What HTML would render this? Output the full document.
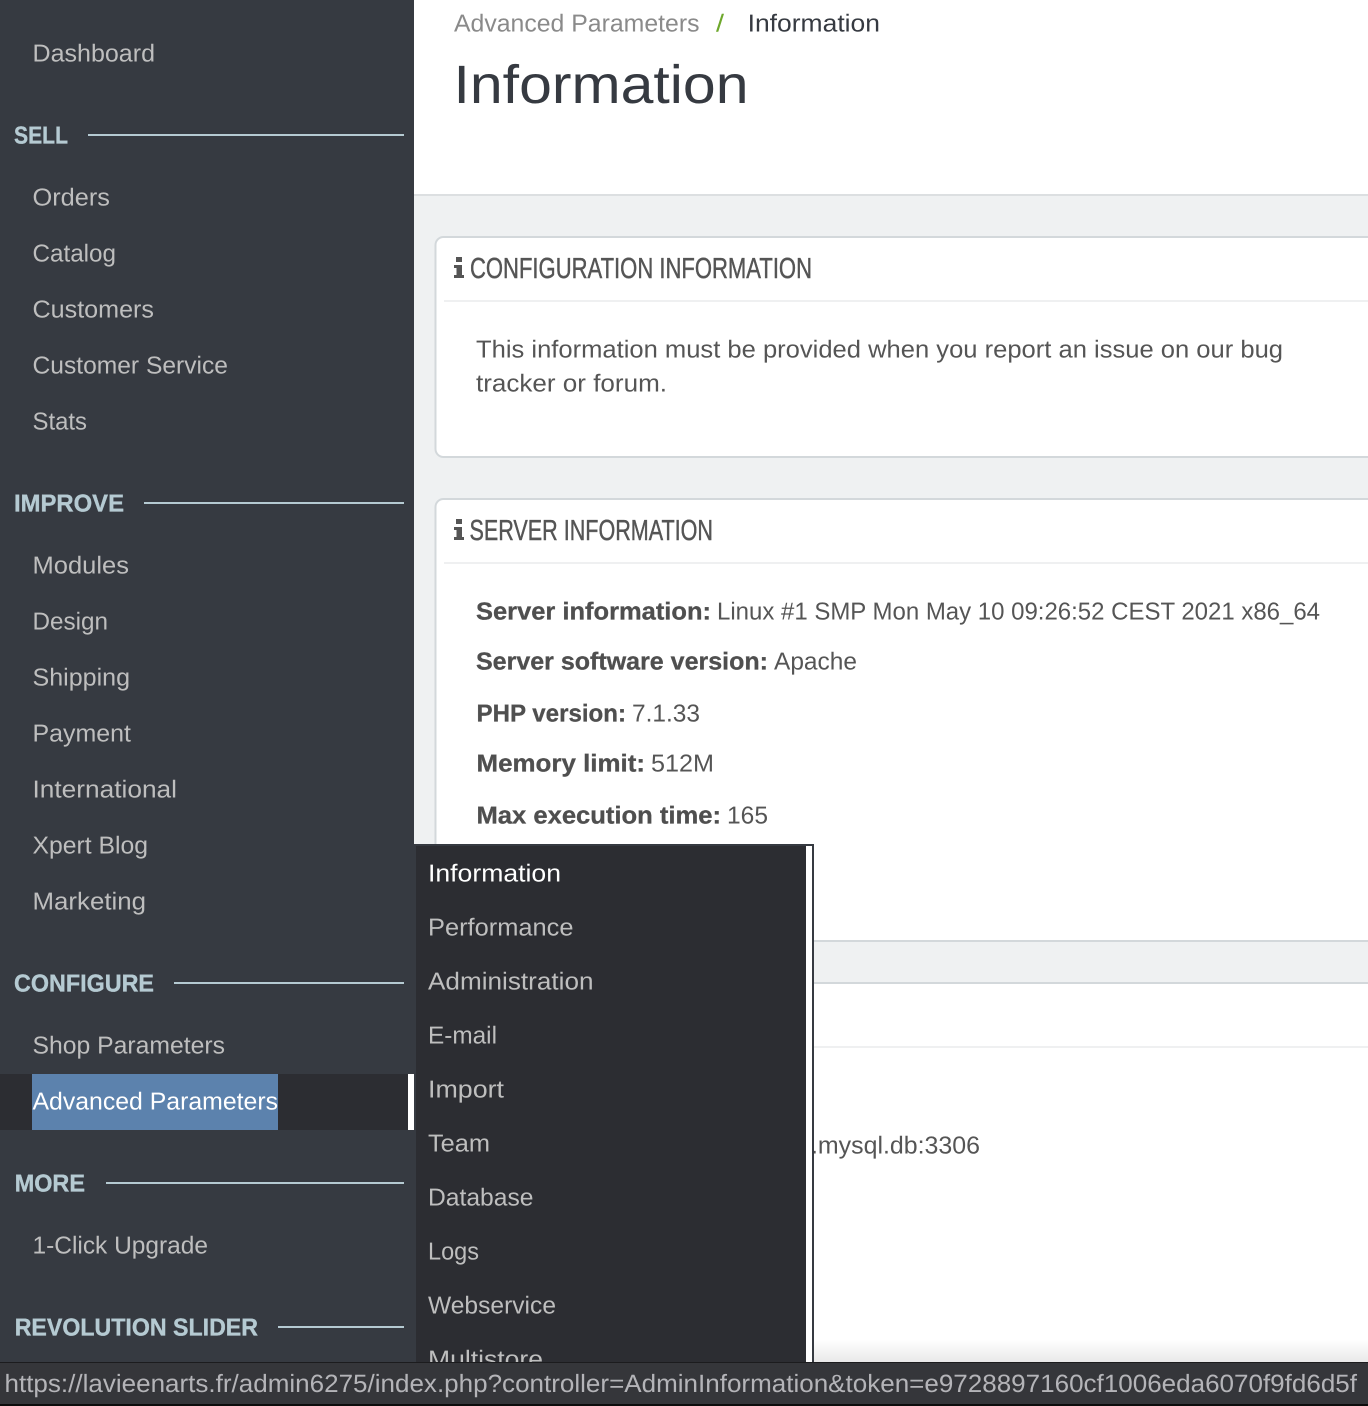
<!DOCTYPE html>
<html lang="en"><head><meta charset="utf-8"><title>Information</title>
<style>
html,body{margin:0;padding:0;background:#fff;width:1368px;height:1406px;overflow:hidden}
svg{display:block}
text{font-family:"Liberation Sans",sans-serif;text-rendering:geometricPrecision}
.s text{font-size:24.5px;fill:#bebebe}
.h text{font-size:24.5px;font-weight:700;fill:#b5cad2;stroke:#b5cad2;stroke-width:.35px}
.p text{font-size:24.5px;fill:#bebebe}
.m text{font-size:24.5px;fill:#555}
.m .b{font-weight:700;fill:#4f4f4f;stroke:#4f4f4f;stroke-width:.3px}
.t text{font-size:29px;fill:#555;stroke:#555;stroke-width:.45px}
</style></head><body>
<svg width="1368" height="1406" viewBox="0 0 1368 1406" xmlns="http://www.w3.org/2000/svg">
<defs><linearGradient id="f" x1="0" y1="0" x2="0" y2="1"><stop offset="0" stop-color="#fff"/><stop offset="1" stop-color="#e9e9e9"/></linearGradient></defs>
<rect width="1368" height="1406" fill="#fff"/>
<!-- main background -->
<rect x="414" y="196" width="954" height="1210" fill="#eff1f2"/>
<rect x="414" y="194" width="954" height="2" fill="#dcdfe1"/>
<!-- panels -->
<rect x="435.500" y="237" width="960" height="220" rx="8" fill="#fff" stroke="#d3d8db" stroke-width="2"/>
<rect x="444" y="300" width="924" height="2" fill="#eff0f1"/>
<rect x="435.500" y="499" width="960" height="442" rx="8" fill="#fff" stroke="#d3d8db" stroke-width="2"/>
<rect x="444" y="562" width="924" height="2" fill="#eff0f1"/>
<rect x="435.500" y="983" width="960" height="460" rx="8" fill="#fff" stroke="#d3d8db" stroke-width="2"/>
<rect x="444" y="1046" width="924" height="2" fill="#eff0f1"/>
<rect x="814" y="1340" width="554" height="22" fill="url(#f)"/>
<!-- header text -->
<text x="454" y="31.700" font-size="24.5" fill="#8a8a8a" textLength="245.500" lengthAdjust="spacingAndGlyphs">Advanced Parameters</text>
<text x="716" y="31.700" font-size="24.5" fill="#6ea82c" textLength="8" lengthAdjust="spacingAndGlyphs">/</text>
<text x="747.600" y="31.700" font-size="24.5" fill="#363a41" textLength="132.400" lengthAdjust="spacingAndGlyphs">Information</text>
<text x="453.500" y="103" font-size="54" fill="#363a41" textLength="295" lengthAdjust="spacingAndGlyphs">Information</text>
<!-- panel titles -->
<path fill="#555" d="M456 257h6v5h-6zM454 265h8v10h2v3h-10v-3h2.500v-7h-2.500z"/>
<path fill="#555" d="M456 519h6v5h-6zM454 527h8v10h2v3h-10v-3h2.500v-7h-2.500z"/>
<g class="t">
<text x="470" y="278" textLength="342" lengthAdjust="spacingAndGlyphs">CONFIGURATION INFORMATION</text>
<text x="469.500" y="540" textLength="243.500" lengthAdjust="spacingAndGlyphs">SERVER INFORMATION</text>
</g>
<g class="m" transform="translate(0,-0.4)">
<text x="476" y="358" textLength="807" lengthAdjust="spacingAndGlyphs">This information must be provided when you report an issue on our bug</text>
<text x="476" y="392" textLength="191" lengthAdjust="spacingAndGlyphs">tracker or forum.</text>
<text class="b" x="476" y="620" textLength="235" lengthAdjust="spacingAndGlyphs">Server information:</text>
<text x="717" y="620" textLength="603" lengthAdjust="spacingAndGlyphs">Linux #1 SMP Mon May 10 09:26:52 CEST 2021 x86_64</text>
<text class="b" x="476" y="670" textLength="292" lengthAdjust="spacingAndGlyphs">Server software version:</text>
<text x="774" y="670" textLength="83" lengthAdjust="spacingAndGlyphs">Apache</text>
<text class="b" x="476.500" y="722" textLength="149.500" lengthAdjust="spacingAndGlyphs">PHP version:</text>
<text x="632" y="722" textLength="68" lengthAdjust="spacingAndGlyphs">7.1.33</text>
<text class="b" x="476.500" y="772" textLength="168.500" lengthAdjust="spacingAndGlyphs">Memory limit:</text>
<text x="651" y="772" textLength="63" lengthAdjust="spacingAndGlyphs">512M</text>
<text class="b" x="476.500" y="824" textLength="244.500" lengthAdjust="spacingAndGlyphs">Max execution time:</text>
<text x="727" y="824" textLength="41" lengthAdjust="spacingAndGlyphs">165</text>
<text x="811" y="1154" textLength="169" lengthAdjust="spacingAndGlyphs">.mysql.db:3306</text>
</g>
<!-- sidebar -->
<rect width="414" height="1406" fill="#363a41"/>
<rect x="0" y="1074" width="408" height="56" fill="#2c2d32"/>
<rect x="408" y="1074" width="6" height="56" fill="#fff"/>
<rect x="32" y="1074" width="246" height="56" fill="#5c82ad"/>
<g class="s" transform="translate(-0.5,-0.4)">
<text x="33" y="62" textLength="122.500" lengthAdjust="spacingAndGlyphs">Dashboard</text>
<text x="33" y="206" textLength="77.500" lengthAdjust="spacingAndGlyphs">Orders</text>
<text x="33" y="262" textLength="83.500" lengthAdjust="spacingAndGlyphs">Catalog</text>
<text x="33" y="318" textLength="121.500" lengthAdjust="spacingAndGlyphs">Customers</text>
<text x="33" y="374" textLength="195.500" lengthAdjust="spacingAndGlyphs">Customer Service</text>
<text x="33" y="430" textLength="54.500" lengthAdjust="spacingAndGlyphs">Stats</text>
<text x="33" y="574" textLength="96.500" lengthAdjust="spacingAndGlyphs">Modules</text>
<text x="33" y="630" textLength="75.500" lengthAdjust="spacingAndGlyphs">Design</text>
<text x="33" y="686" textLength="97.500" lengthAdjust="spacingAndGlyphs">Shipping</text>
<text x="33" y="742" textLength="98.500" lengthAdjust="spacingAndGlyphs">Payment</text>
<text x="33" y="798" textLength="144.500" lengthAdjust="spacingAndGlyphs">International</text>
<text x="33" y="854" textLength="115.500" lengthAdjust="spacingAndGlyphs">Xpert Blog</text>
<text x="33" y="910" textLength="113.500" lengthAdjust="spacingAndGlyphs">Marketing</text>
<text x="33" y="1054" textLength="192.500" lengthAdjust="spacingAndGlyphs">Shop Parameters</text>
<text x="33" y="1110" textLength="245.500" lengthAdjust="spacingAndGlyphs" style="fill:#fff">Advanced Parameters</text>
<text x="33" y="1254" textLength="175.500" lengthAdjust="spacingAndGlyphs">1-Click Upgrade</text>
</g>
<g class="h" transform="translate(0,-0.4)">
<text x="14" y="144" textLength="54" lengthAdjust="spacingAndGlyphs">SELL</text>
<text x="14" y="512" textLength="110" lengthAdjust="spacingAndGlyphs">IMPROVE</text>
<text x="14" y="992" textLength="140" lengthAdjust="spacingAndGlyphs">CONFIGURE</text>
<text x="14.700" y="1192" textLength="70.300" lengthAdjust="spacingAndGlyphs">MORE</text>
<text x="14.700" y="1336" textLength="243.300" lengthAdjust="spacingAndGlyphs">REVOLUTION SLIDER</text>
</g>
<g fill="#b5cad2">
<rect x="88" y="134" width="316" height="2"/>
<rect x="144" y="502" width="260" height="2"/>
<rect x="174" y="982" width="230" height="2"/>
<rect x="106" y="1182" width="298" height="2"/>
<rect x="278" y="1326" width="126" height="2"/>
</g>
<!-- flyout -->
<rect x="414" y="844" width="400" height="520" fill="#363a41"/>
<rect x="416" y="846" width="390" height="518" fill="#2c2d32"/>
<rect x="806" y="846" width="6" height="518" fill="#fff"/>
<g class="p" transform="translate(0,-0.4)">
<text x="428" y="882" textLength="133" lengthAdjust="spacingAndGlyphs" style="fill:#fff">Information</text>
<text x="428" y="936" textLength="145.500" lengthAdjust="spacingAndGlyphs">Performance</text>
<text x="428" y="990" textLength="165.500" lengthAdjust="spacingAndGlyphs">Administration</text>
<text x="428" y="1044" textLength="69" lengthAdjust="spacingAndGlyphs">E-mail</text>
<text x="428" y="1098" textLength="76" lengthAdjust="spacingAndGlyphs">Import</text>
<text x="428" y="1152" textLength="62" lengthAdjust="spacingAndGlyphs">Team</text>
<text x="428" y="1206" textLength="105.500" lengthAdjust="spacingAndGlyphs">Database</text>
<text x="428" y="1260" textLength="51" lengthAdjust="spacingAndGlyphs">Logs</text>
<text x="428" y="1314" textLength="128" lengthAdjust="spacingAndGlyphs">Webservice</text>
<text x="428" y="1368" textLength="115" lengthAdjust="spacingAndGlyphs">Multistore</text>
</g>
<!-- status bar -->
<rect x="0" y="1362" width="1368" height="44" fill="#35363a"/>
<rect x="0" y="1362" width="1368" height="1" fill="#1c1c1e"/>
<rect x="0" y="1404" width="1368" height="2" fill="#0c0c0c"/>
<text x="4.500" y="1392" font-size="25" fill="#b4b4b8" textLength="1352.500" lengthAdjust="spacingAndGlyphs">https://lavieenarts.fr/admin6275/index.php?controller=AdminInformation&amp;token=e9728897160cf1006eda6070f9fd6d5f</text>
</svg>
</body></html>
